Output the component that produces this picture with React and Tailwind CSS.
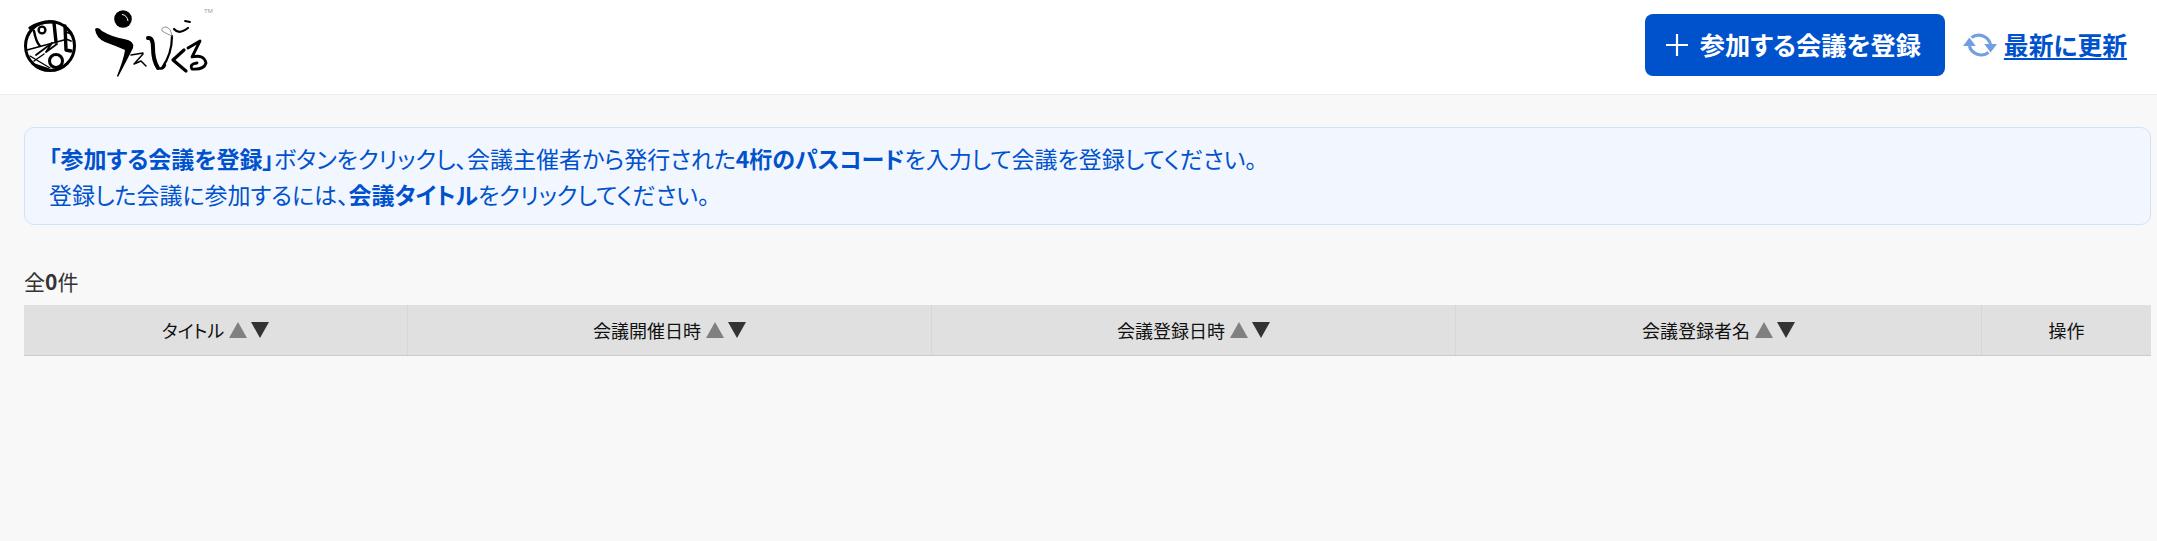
import React from "react";

function Logo() {
  return (
    <svg width="220" height="94" viewBox="0 0 220 94" className="block shrink-0">
      <g fill="none" stroke="#000" strokeLinecap="round" strokeLinejoin="round">
        <circle cx="50" cy="48" r="24.5" strokeWidth="3" />
        <circle cx="42" cy="32" r="3.4" strokeWidth="2.4" />
        <path d="M30 30 Q38 24 53 24" strokeWidth="3.2" />
        <path d="M34 33 Q36 44 40 48" strokeWidth="2.4" />
        <path d="M54 25 L56 44" strokeWidth="3.4" />
        <path d="M65 28 L66 52 L71 53" strokeWidth="3.4" />
        <path d="M66 34 L71 36 M66 41 L71 43" strokeWidth="1.8" />
        <path d="M27 52 L64 42" strokeWidth="1.6" />
        <path d="M36 57 L52 45 L46 54 L57 46" strokeWidth="1.8" />
        <path d="M30 58 L50 70 M34 63 L44 56" strokeWidth="1.4" />
        <circle cx="56" cy="63" r="6.5" strokeWidth="3" />
        <path d="M36 67 L48 71" strokeWidth="2.2" />
      </g>
      <circle cx="123" cy="21" r="8.8" fill="#000" />
      <path d="M122 16.5 Q127 17 128 23" fill="none" stroke="#fff" strokeWidth="1" />
      <path d="M95 31 Q98 28 102 33 Q112 39 124 41 Q135 43 133 50 Q128 60 118 79 L117 78 Q124 60 125 52 Q116 48 105 44 Q96 40 95 31 Z" fill="#000" />
      <g fill="none" stroke="#000" strokeLinecap="round" strokeLinejoin="round">
        <path d="M131 57 L143 55 M143 56 L134 66 L141 63 L146 68" strokeWidth="1.5" />
        <path d="M148 40 Q153 39 153 50 Q153 62 158 70" strokeWidth="4" />
        <path d="M158 70 Q163 72 165 67" strokeWidth="2.4" />
        <path d="M172 38 Q172 56 162 70" strokeWidth="2.2" />
        <path d="M172 38 Q167 36 162 33 Q161 29 166 29 Q171 30 172 38" stroke="#777" strokeWidth="0.8" />
        <path d="M174 31 Q179 37 188 30" strokeWidth="2.2" />
        <path d="M185 23 L190 24" strokeWidth="1.8" />
        <path d="M184 52 L173 62 L186 73" strokeWidth="3.2" />
        <path d="M188 50 L200 43 L192 59 Q204 56 206 65 Q204 72 192 71 Q189 66 197 65" strokeWidth="2.8" />
      </g>
      <text x="204" y="15" fontSize="6" fill="#999" fontFamily="Liberation Sans">TM</text>
    </svg>
  );
}

function RefreshIcon() {
  return (
    <svg width="34" height="26" viewBox="0 0 32 24" className="shrink-0 opacity-55">
      <g fill="none" stroke="#0052cc" strokeWidth="3">
        <path d="M8 5 A11.5 11.5 0 0 1 26 12" />
        <path d="M6 13 A11.5 11.5 0 0 0 24 19" />
      </g>
      <path d="M0 13 L12 13 L6 5 Z M20 11 L32 11 L26 19 Z" fill="#0052cc" />
    </svg>
  );
}

function Sort() {
  return (
    <span className="ml-[5px] inline-flex items-center gap-[4px]">
      <svg width="18" height="16" viewBox="0 0 18 16"><path d="M9 0 L18 16 L0 16 Z" fill="#808080" /></svg>
      <svg width="18" height="16" viewBox="0 0 18 16"><path d="M0 0 L18 0 L9 16 Z" fill="#333" /></svg>
    </span>
  );
}

function Th({ children, sort, className = "border-r" }) {
  return (
    <div className={`flex items-center justify-center border-[#d6d6d6] text-[18px] text-[#111] ${className}`}>
      {children}
      {sort && <Sort />}
    </div>
  );
}

export default function App() {
  return (
    <div
      className="min-h-[541px] bg-[#f8f8f8] [font-feature-settings:'palt']"
      style={{ fontFamily: '"Noto Sans CJK JP", "Noto Sans", sans-serif' }}
    >
      <header className="flex h-[95px] items-center justify-between border-b border-[#eeeeee] bg-white pr-[30px] pb-[5px]">
        <Logo />
        <div className="flex items-center gap-[18px]">
          <button className="flex h-[62px] w-[300px] items-center gap-[12px] rounded-[8px] bg-[#0052cc] pl-[21px] text-[25.2px] font-bold text-white">
            <svg width="22" height="22" viewBox="0 0 22 22" className="shrink-0">
              <path d="M11 0 V22 M0 11 H22" stroke="#fff" strokeWidth="2.2" />
            </svg>
            参加する会議を登録
          </button>
          <a className="flex items-center gap-[7px] text-[24.8px] font-bold text-[#0052cc]">
            <RefreshIcon />
            <span className="underline decoration-[2px] underline-offset-[3px]">最新に更新</span>
          </a>
        </div>
      </header>

      <main className="pl-[24px] pr-[6px] pt-[32px]">
        <div className="rounded-[10px] border border-[#d3e2fb] bg-[#f1f6ff] px-[24px] py-[12px] text-[23px] leading-[36px] text-[#0052cc]">
          <p><b>「参加する会議を登録」</b>ボタンをクリックし、会議主催者から発行された<b>4桁のパスコード</b>を入力して会議を登録してください。</p>
          <p>登録した会議に参加するには、<b>会議タイトル</b>をクリックしてください。</p>
        </div>

        <p className="mt-[39px] text-[21px] leading-[34px] text-[#333]">全<b>0</b>件</p>

        <div className="mt-[7px] grid h-[51px] grid-cols-[384px_524px_524px_526px_1fr] border-b border-[#cccccc] bg-[#e0e0e0]">
          <Th sort>タイトル</Th>
          <Th sort>会議開催日時</Th>
          <Th sort>会議登録日時</Th>
          <Th sort>会議登録者名</Th>
          <Th className="border-r-0">操作</Th>
        </div>
      </main>
    </div>
  );
}
